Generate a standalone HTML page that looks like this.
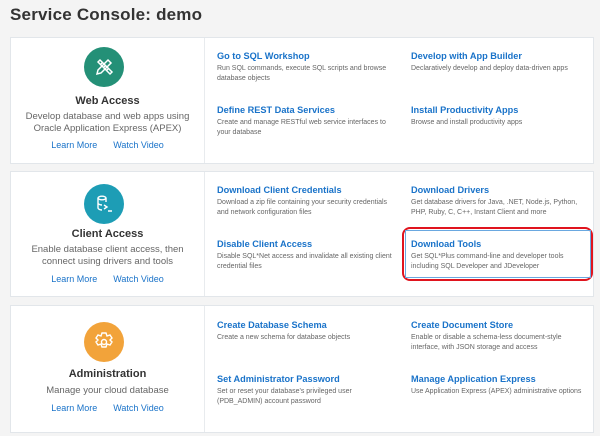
<!DOCTYPE html><html><head><style>
body{margin:0;background:#f4f4f4;font-family:"Liberation Sans",sans-serif;width:600px;height:436px;position:relative;overflow:hidden}
h1{position:absolute;left:10px;top:5px;margin:0;font-size:17px;font-weight:bold;color:#333;letter-spacing:0.2px}
.card{position:absolute;left:10px;width:584px;background:#fff;border:1px solid #e2e6ea;box-sizing:border-box}
.div{position:absolute;left:193px;top:0;bottom:0;border-left:1px solid #e8ebee}
.circ{position:absolute;left:73px;width:40px;height:40px;border-radius:50%}
.lt{position:absolute;left:0;width:193px;text-align:center}
.t{font-size:11px;font-weight:bold;color:#333}
.d{font-size:9.5px;color:#666;line-height:12px}
.l{font-size:9px;color:#1a73c9}
.it{position:absolute;width:180px}
.it b{display:block;font-size:9.2px;color:#1a73c9;margin-bottom:3px}
.it span{display:block;font-size:7px;color:#666;line-height:10px}
</style></head><body>
<h1>Service Console: demo</h1>

<div class="card" style="top:37px;height:127px">
<div class="div"></div>
<div class="circ" style="top:9px;background:#249077"><svg width="40" height="40" viewBox="0 0 40 40" fill="none" stroke="#fff" stroke-width="1.5"><path d="M14 15l2-2 12 12-2 2zM16 18l2-2M19 21l2-2M22 24l2-2"/><path d="M24 13l3 3-10 10-4 1 1-4z"/></svg></div>
<div class="lt t" style="top:57px">Web Access</div>
<div class="lt d" style="top:73px">Develop database and web apps using<br>Oracle Application Express (APEX)</div>
<div class="lt l" style="top:102px"><span style="margin-right:16px">Learn More</span>Watch Video</div>
<div class="it" style="left:206px;top:13px"><b>Go to SQL Workshop</b><span>Run SQL commands, execute SQL scripts and browse database objects</span></div>
<div class="it" style="left:400px;top:13px"><b>Develop with App Builder</b><span>Declaratively develop and deploy data-driven apps</span></div>
<div class="it" style="left:206px;top:67px"><b>Define REST Data Services</b><span>Create and manage RESTful web service interfaces to your database</span></div>
<div class="it" style="left:400px;top:67px"><b>Install Productivity Apps</b><span>Browse and install productivity apps</span></div>
</div>

<div class="card" style="top:171px;height:126px">
<div class="div"></div>
<div class="circ" style="top:12px;background:#1d9db5"><svg width="40" height="40" viewBox="0 0 40 40" fill="none" stroke="#fff" stroke-width="1.4"><ellipse cx="18" cy="14" rx="4" ry="1.8"/><path d="M14 14v10c0 1 2 2 4 2M22 14v4M14 19c0 1 2 2 4 2M20 21l3 2-3 2M24 27h4"/></svg></div>
<div class="lt t" style="top:56px">Client Access</div>
<div class="lt d" style="top:72px">Enable database client access, then<br>connect using drivers and tools</div>
<div class="lt l" style="top:102px"><span style="margin-right:16px">Learn More</span>Watch Video</div>
<div class="it" style="left:206px;top:13px"><b>Download Client Credentials</b><span>Download a zip file containing your security credentials and network configuration files</span></div>
<div class="it" style="left:400px;top:13px"><b>Download Drivers</b><span>Get database drivers for Java, .NET, Node.js, Python, PHP, Ruby, C, C++, Instant Client and more</span></div>
<div class="it" style="left:206px;top:67px"><b>Disable Client Access</b><span>Disable SQL*Net access and invalidate all existing client credential files</span></div>
<div style="position:absolute;left:391px;top:55px;width:191px;height:54px;border:2px solid #e0141e;border-radius:8px;box-sizing:border-box"></div>
<div style="position:absolute;left:394px;top:58px;width:186px;height:48px;border:1px solid #6aa8e0;box-sizing:border-box"></div>
<div class="it" style="left:400px;top:67px"><b>Download Tools</b><span>Get SQL*Plus command-line and developer tools including SQL Developer and JDeveloper</span></div>
</div>

<div class="card" style="top:305px;height:128px">
<div class="div"></div>
<div class="circ" style="top:16px;background:#f2a33a"><svg width="40" height="40" viewBox="0 0 40 40" fill="none" stroke="#fff" stroke-width="1.4"><path d="M18 11h4l1 3 3-1 2 3-2 2 2 2-2 3-3-1-1 3h-4l-1-3-3 1-2-3 2-2-2-2 2-3 3 1z"/><circle cx="20" cy="20" r="2.5"/></svg></div>
<div class="lt t" style="top:62px">Administration</div>
<div class="lt d" style="top:79px">Manage your cloud database</div>
<div class="lt l" style="top:97px"><span style="margin-right:16px">Learn More</span>Watch Video</div>
<div class="it" style="left:206px;top:14px"><b>Create Database Schema</b><span>Create a new schema for database objects</span></div>
<div class="it" style="left:400px;top:14px"><b>Create Document Store</b><span>Enable or disable a schema-less document-style interface, with JSON storage and access</span></div>
<div class="it" style="left:206px;top:68px"><b>Set Administrator Password</b><span>Set or reset your database's privileged user (PDB_ADMIN) account password</span></div>
<div class="it" style="left:400px;top:68px"><b>Manage Application Express</b><span>Use Application Express (APEX) administrative options</span></div>
</div>
</body></html>
